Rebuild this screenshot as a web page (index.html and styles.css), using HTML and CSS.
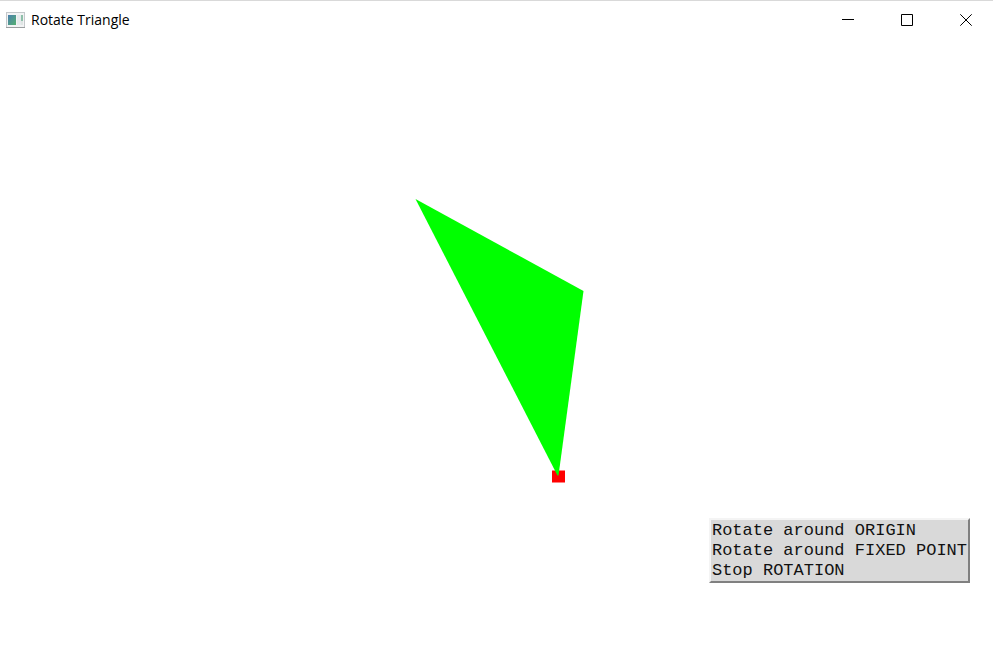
FILE: index.html
```html
<!DOCTYPE html>
<html lang="en">
<head>
<meta charset="utf-8">
<title>Rotate Triangle</title>
<link rel="stylesheet" href="styles.css">
</head>
<body>
<div class="window">
  <header class="titlebar">
    <svg class="app-icon" width="19" height="16" viewBox="0 0 19 16" aria-hidden="true">
      <defs>
        <linearGradient id="pane" x1="0" y1="0" x2="1" y2="1">
          <stop offset="0" stop-color="#4a7fae"/>
          <stop offset="1" stop-color="#55b071"/>
        </linearGradient>
      </defs>
      <rect x="0.5" y="0.5" width="18" height="15" fill="#f2f3f4" stroke="#c4c8cb"/>
      <path d="M0 15.5H19" stroke="#9a9d9f"/>
      <rect x="2" y="3" width="8" height="10" fill="url(#pane)"/>
      <rect x="11" y="3" width="4" height="10" fill="#e6eaec"/>
      <rect x="15" y="3" width="2" height="6" fill="#8dbfa9"/>
      <rect x="15" y="9" width="2" height="4" fill="#dfe5e4"/>
    </svg>
    <h1 class="title">Rotate Triangle</h1>
    <div class="controls">
      <button class="control" type="button" aria-label="Minimize">
        <svg width="12" height="12" viewBox="0 0 12 12"><path d="M0 5.5H12"/></svg>
      </button>
      <button class="control" type="button" aria-label="Maximize">
        <svg width="12" height="12" viewBox="0 0 12 12"><path d="M0.5 0.5H11.5V11.5H0.5Z"/></svg>
      </button>
      <button class="control" type="button" aria-label="Close">
        <svg width="12" height="12" viewBox="0 0 12 12"><path d="M0.3 0.3L11.7 11.7M11.7 0.3L0.3 11.7"/></svg>
      </button>
    </div>
  </header>
  <main class="viewport">
    <svg class="scene" viewBox="0 0 993 612" role="img" aria-label="Triangle and its fixed point">
      <rect x="552" y="432" width="13" height="12" fill="#f00"/>
      <path d="M415.5 160.5L583.5 252.5L558.5 437H557.5Z" fill="#0f0"/>
    </svg>
    <div class="menu" role="menu">
      <button class="item" type="button" role="menuitem">Rotate around ORIGIN</button>
      <button class="item" type="button" role="menuitem">Rotate around FIXED POINT</button>
      <button class="item" type="button" role="menuitem">Stop ROTATION</button>
    </div>
  </main>
</div>
</body>
</html>
```
FILE: styles.css
```css
* {
  box-sizing: border-box;
}

body {
  margin: 0;
  background: #fff;
  color: #000;
}

.window {
  display: flex;
  flex-direction: column;
  height: 100vh;
  border-top: 1px solid #d9d9d9;
}

.titlebar {
  display: flex;
  align-items: center;
  flex: none;
  height: 37px;
  padding-left: 6px;
}

.app-icon {
  flex: none;
  margin-right: 6px;
}

.title {
  flex: 1;
  margin: 0;
  font: 400 14px/20px "Open Sans", "Noto Sans", sans-serif;
}

.controls {
  display: flex;
  gap: 5px;
  height: 100%;
}

.control {
  display: flex;
  align-items: center;
  justify-content: center;
  width: 54px;
  padding: 0;
  border: 0;
  background: none;
}

.control path {
  fill: none;
  stroke: #000;
}

.viewport {
  position: relative;
  flex: 1;
  min-height: 0;
}

.scene {
  display: block;
  width: 100%;
  height: 100%;
}

.menu {
  position: absolute;
  right: 23px;
  bottom: 68px;
  padding: 1px 1px 0;
  border: 2px solid;
  border-color: #f4f4f4 #808080 #808080 #f4f4f4;
  background: #d9d9d9;
}

.item {
  display: block;
  width: 100%;
  padding: 0;
  border: 0;
  background: none;
  color: #111;
  font: 17px/20px "Liberation Mono", "DejaVu Sans Mono", monospace;
  text-align: left;
  white-space: nowrap;
}
```
